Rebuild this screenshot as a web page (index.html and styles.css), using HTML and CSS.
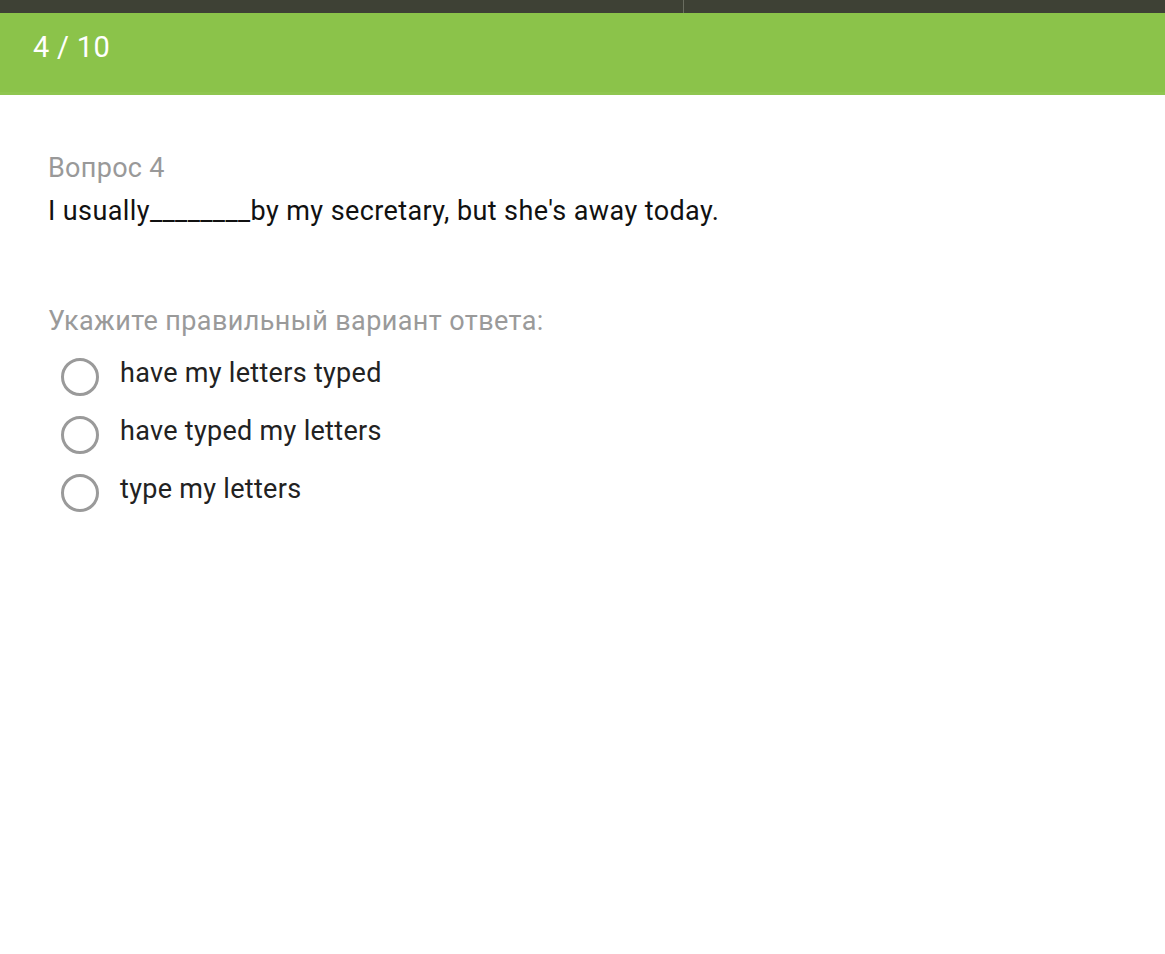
FILE: index.html
```html
<html>
  <head>
    <title>Тест</title>
    <link rel="stylesheet" href="styles.css">
  </head>
  <body>
    <div class="topbar">
      <div class="topbar-left"></div>
      <div class="topbar-right"></div>
    </div>
    <div class="header">
      <span class="counter">4 / 10</span>
    </div>
    <div class="content">
      <div class="question-label">Вопрос 4</div>
      <div class="question-text">I usually________by my secretary, but she's away today.</div>

      <div class="hint">Укажите правильный вариант ответа:</div>
      <div class="options">
        <label class="option"><span class="radio"></span><span class="option-text">have my letters typed</span></label>
        <label class="option"><span class="radio"></span><span class="option-text">have typed my letters</span></label>
        <label class="option"><span class="radio"></span><span class="option-text">type my letters</span></label>
      </div>
    </div>
  </body>
</html>
```

FILE: styles.css
```css
body {
  margin: 0;
  font-family: Roboto, "Noto Sans", sans-serif;
  background: #fff;
}

.topbar {
  display: flex;
  height: 13px;
  background: #3e4135;
}

.topbar-left {
  width: 683px;
}

.topbar-right {
  flex: 1;
  border-left: 1px solid #6a6d60;
}

.header {
  background: #8bc34a;
  border-bottom: 3px solid #8fc650;
  padding: 0 33px 12px;
  height: 67px;
  display: flex;
  align-items: center;
}

.counter {
  color: #fff;
  font-size: 29px;
  letter-spacing: 0.3px;
}

.content {
  padding: 54px 48px 0;
}

.question-label {
  color: #999;
  font-size: 27px;
  letter-spacing: 0.3px;
  line-height: 38px;
}

.question-text {
  color: #111;
  font-size: 27px;
  letter-spacing: 0.4px;
  line-height: 38px;
  margin-top: 5px;
}

.hint {
  color: #9a9a9a;
  font-size: 27px;
  letter-spacing: 0.4px;
  line-height: 38px;
  margin-top: 72px;
}

.options {
  display: flex;
  flex-direction: column;
  gap: 20px;
  margin-top: 14px;
  padding-left: 13px;
}

.option {
  display: flex;
  align-items: center;
  gap: 21px;
  height: 38px;
}

.radio {
  width: 32px;
  height: 32px;
  border: 3.5px solid #9a9a9a;
  border-radius: 50%;
  flex: none;
  margin-top: 8px;
}

.option-text {
  color: #222;
  font-size: 27px;
  letter-spacing: 0.3px;
}
```
